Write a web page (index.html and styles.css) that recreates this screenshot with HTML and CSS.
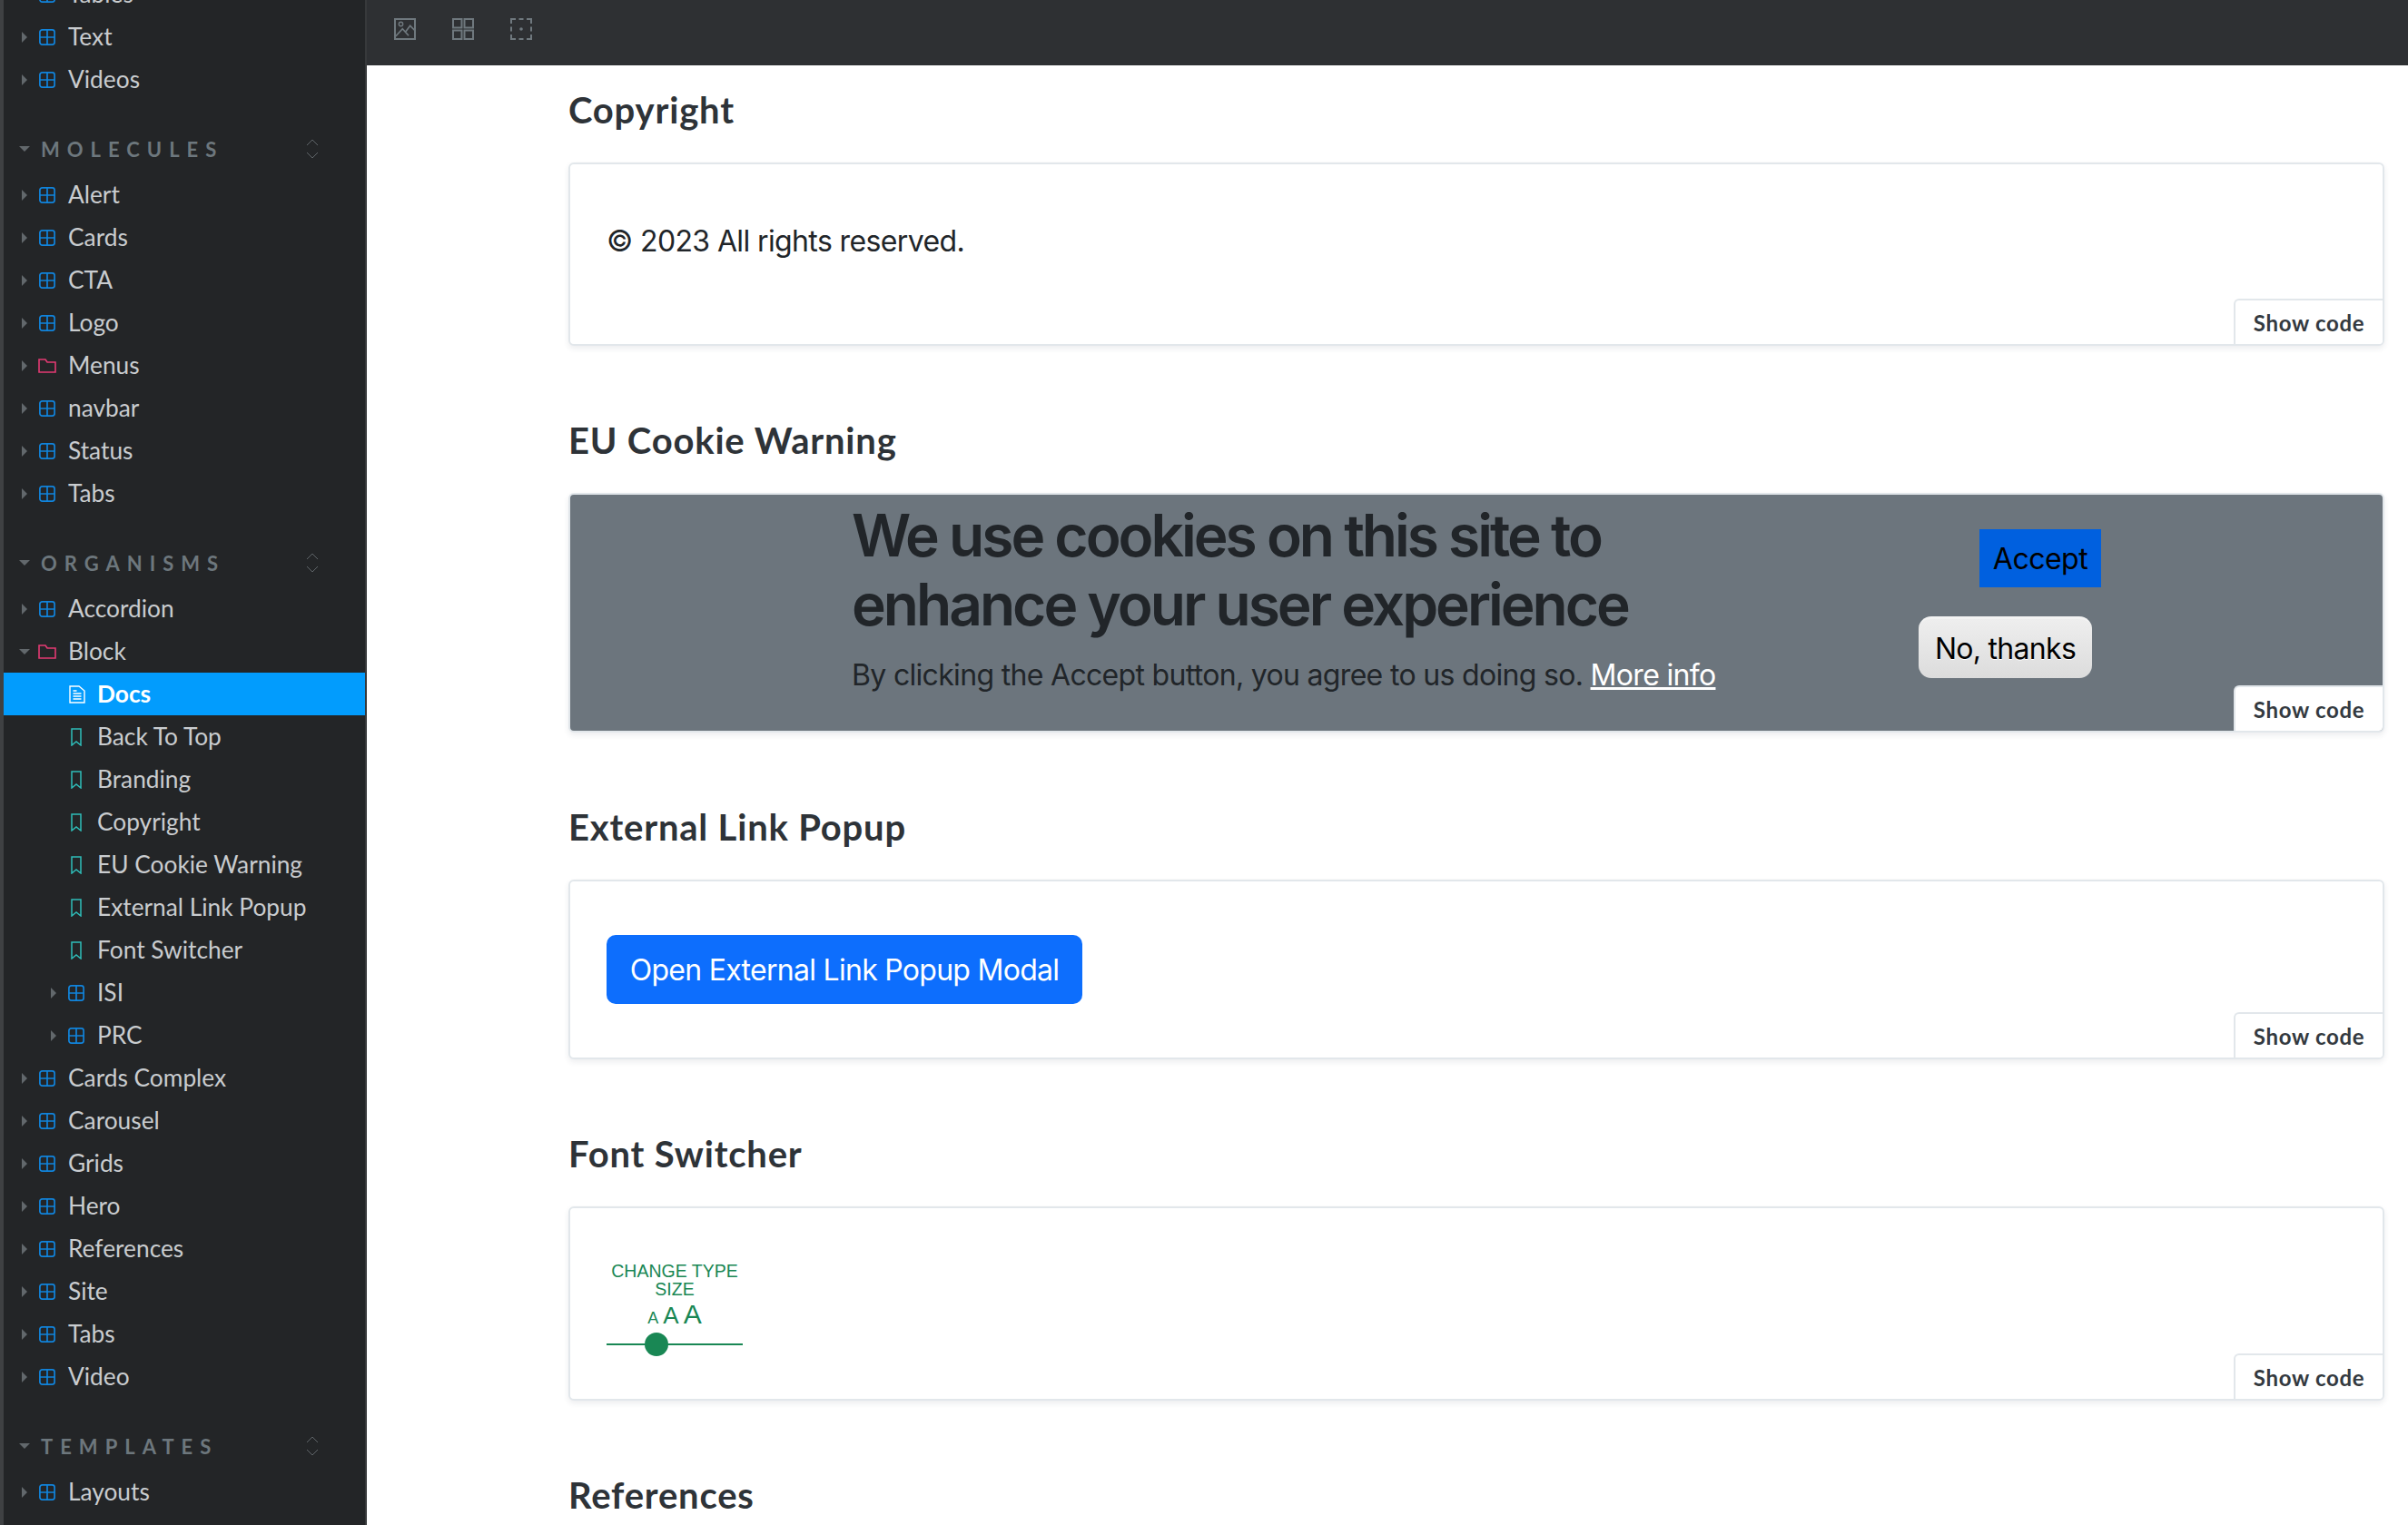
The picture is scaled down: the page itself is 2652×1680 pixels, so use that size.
FILE: index.html
```html
<!DOCTYPE html>
<html lang="en">
<head>
<meta charset="utf-8">
<title>Storybook Docs</title>
<link rel="stylesheet" href="styles.css">
</head>
<body>
<svg class="defs" width="0" height="0" aria-hidden="true">
  <symbol id="i-comp" viewBox="0 0 18 18"><rect x=".9" y=".9" width="16.2" height="16.2" rx="2.6" fill="none" stroke="currentColor" stroke-width="1.7"/><path d="M9 1v16M1 9h16" stroke="currentColor" stroke-width="1.7" fill="none"/></symbol>
  <symbol id="i-folder" viewBox="0 0 20 16"><path d="M1 15V1h7l2 3h9v11z" fill="none" stroke="currentColor" stroke-width="1.6"/></symbol>
  <symbol id="i-story" viewBox="0 0 12 20"><path d="M1 1h10v18l-5-4-5 4z" fill="none" stroke="currentColor" stroke-width="1.5"/></symbol>
  <symbol id="i-doc" viewBox="0 0 18 20"><path d="M1 1h10l6 5v13H1z" fill="none" stroke="currentColor" stroke-width="1.4"/><path d="M4.5 9h9M4.5 12h9M4.5 15h9M4.5 6h4" stroke="currentColor" stroke-width="1.4"/></symbol>
  <symbol id="i-sort" viewBox="0 0 14 22"><path d="M1 7l6-6 6 6M1 15l6 6 6-6" fill="none" stroke="currentColor" stroke-width="1"/></symbol>
</svg>
<div class="app">
  <nav class="sidebar">
    <ul class="tree">
      <li class="row"><i class="tri"></i><svg class="ic comp"><use href="#i-comp"/></svg><span>Tables</span></li>
      <li class="row"><i class="tri"></i><svg class="ic comp"><use href="#i-comp"/></svg><span>Text</span></li>
      <li class="row"><i class="tri"></i><svg class="ic comp"><use href="#i-comp"/></svg><span>Videos</span></li>
      <li class="group"><i class="tri-down"></i><span class="group-name">MOLECULES</span><svg class="sort"><use href="#i-sort"/></svg></li>
      <li class="row"><i class="tri"></i><svg class="ic comp"><use href="#i-comp"/></svg><span>Alert</span></li>
      <li class="row"><i class="tri"></i><svg class="ic comp"><use href="#i-comp"/></svg><span>Cards</span></li>
      <li class="row"><i class="tri"></i><svg class="ic comp"><use href="#i-comp"/></svg><span>CTA</span></li>
      <li class="row"><i class="tri"></i><svg class="ic comp"><use href="#i-comp"/></svg><span>Logo</span></li>
      <li class="row"><i class="tri"></i><svg class="ic folder"><use href="#i-folder"/></svg><span>Menus</span></li>
      <li class="row"><i class="tri"></i><svg class="ic comp"><use href="#i-comp"/></svg><span>navbar</span></li>
      <li class="row"><i class="tri"></i><svg class="ic comp"><use href="#i-comp"/></svg><span>Status</span></li>
      <li class="row"><i class="tri"></i><svg class="ic comp"><use href="#i-comp"/></svg><span>Tabs</span></li>
      <li class="group"><i class="tri-down"></i><span class="group-name">ORGANISMS</span><svg class="sort"><use href="#i-sort"/></svg></li>
      <li class="row"><i class="tri"></i><svg class="ic comp"><use href="#i-comp"/></svg><span>Accordion</span></li>
      <li class="row"><i class="tri-down"></i><svg class="ic folder"><use href="#i-folder"/></svg><span>Block</span></li>
      <li class="row leaf active"><svg class="ic doc"><use href="#i-doc"/></svg><span>Docs</span></li>
      <li class="row leaf"><svg class="ic story"><use href="#i-story"/></svg><span>Back To Top</span></li>
      <li class="row leaf"><svg class="ic story"><use href="#i-story"/></svg><span>Branding</span></li>
      <li class="row leaf"><svg class="ic story"><use href="#i-story"/></svg><span>Copyright</span></li>
      <li class="row leaf"><svg class="ic story"><use href="#i-story"/></svg><span>EU Cookie Warning</span></li>
      <li class="row leaf"><svg class="ic story"><use href="#i-story"/></svg><span>External Link Popup</span></li>
      <li class="row leaf"><svg class="ic story"><use href="#i-story"/></svg><span>Font Switcher</span></li>
      <li class="row nested"><i class="tri"></i><svg class="ic comp"><use href="#i-comp"/></svg><span>ISI</span></li>
      <li class="row nested"><i class="tri"></i><svg class="ic comp"><use href="#i-comp"/></svg><span>PRC</span></li>
      <li class="row"><i class="tri"></i><svg class="ic comp"><use href="#i-comp"/></svg><span>Cards Complex</span></li>
      <li class="row"><i class="tri"></i><svg class="ic comp"><use href="#i-comp"/></svg><span>Carousel</span></li>
      <li class="row"><i class="tri"></i><svg class="ic comp"><use href="#i-comp"/></svg><span>Grids</span></li>
      <li class="row"><i class="tri"></i><svg class="ic comp"><use href="#i-comp"/></svg><span>Hero</span></li>
      <li class="row"><i class="tri"></i><svg class="ic comp"><use href="#i-comp"/></svg><span>References</span></li>
      <li class="row"><i class="tri"></i><svg class="ic comp"><use href="#i-comp"/></svg><span>Site</span></li>
      <li class="row"><i class="tri"></i><svg class="ic comp"><use href="#i-comp"/></svg><span>Tabs</span></li>
      <li class="row"><i class="tri"></i><svg class="ic comp"><use href="#i-comp"/></svg><span>Video</span></li>
      <li class="group"><i class="tri-down"></i><span class="group-name">TEMPLATES</span><svg class="sort"><use href="#i-sort"/></svg></li>
      <li class="row"><i class="tri"></i><svg class="ic comp"><use href="#i-comp"/></svg><span>Layouts</span></li>
    </ul>
  </nav>
  <div class="content">
    <header class="toolbar">
      <svg class="tool" viewBox="0 0 24 24"><rect x="1" y="1" width="22" height="22" fill="none" stroke="currentColor" stroke-width="2"/><circle cx="7.5" cy="6.5" r="2.2" fill="none" stroke="currentColor" stroke-width="1.4"/><path d="M1.7 20l7.6-8.3 6.7 7.6M12.7 15l5-6.7 5.6 5.7" fill="none" stroke="currentColor" stroke-width="1.7"/></svg>
      <svg class="tool" viewBox="0 0 24 24"><path d="M1 1h9.5v9.5H1zM13.5 1H23v9.5h-9.5zM1 13.5h9.5V23H1zM13.5 13.5H23V23h-9.5z" fill="none" stroke="currentColor" stroke-width="2"/></svg>
      <svg class="tool" viewBox="0 0 24 24"><path d="M1 6V1h5M18 1h5v5M23 18v5h-5M6 23H1v-5M1 9.500v5M23 9.500v5M9.500 1h5M9.500 23h5" fill="none" stroke="currentColor" stroke-width="2"/><circle cx="12" cy="12" r="1.800" fill="currentColor"/></svg>
    </header>
    <main class="docs">
      <section class="story">
        <h2>Copyright</h2>
        <div class="card card-copy">
          <p class="copy">© 2023 All rights reserved.</p>
          <button class="show">Show code</button>
        </div>
      </section>
      <section class="story">
        <h2>EU Cookie Warning</h2>
        <div class="card card-cookie">
          <div class="cookie">
            <div class="cookie-text">
              <h3>We use cookies on this site to enhance your user experience</h3>
              <p>By clicking the Accept button, you agree to us doing so. <a href="#">More info</a></p>
            </div>
            <div class="cookie-actions">
              <button class="accept">Accept</button>
              <button class="decline">No, thanks</button>
            </div>
          </div>
          <button class="show">Show code</button>
        </div>
      </section>
      <section class="story">
        <h2>External Link Popup</h2>
        <div class="card card-ext">
          <button class="primary">Open External Link Popup Modal</button>
          <button class="show">Show code</button>
        </div>
      </section>
      <section class="story">
        <h2>Font Switcher</h2>
        <div class="card card-font">
          <div class="fontsw">
            <div class="fs-label">CHANGE TYPE SIZE</div>
            <div class="fs-sizes"><span class="a1">A</span><span class="a2">A</span><span class="a3">A</span></div>
            <div class="fs-slider"><i class="fs-knob"></i></div>
          </div>
          <button class="show">Show code</button>
        </div>
      </section>
      <section class="story">
        <h2>References</h2>
      </section>
    </main>
  </div>
</div>
</body>
</html>
```
FILE: styles.css
```css
* { box-sizing: border-box; }
html, body { margin: 0; padding: 0; height: 1680px; overflow: hidden; background: #fff; }
body { font-family: "Lato", "Noto Sans", sans-serif; color: #212529; }
.defs { position: absolute; }
.app { display: flex; height: 1680px; width: 2652px; overflow: hidden; }

.sidebar {
  width: 404px; flex: none; height: 1680px; overflow: hidden;
  background: #232527;
  border-left: 4px solid #3f4143;
  border-right: 2px solid #37393b;
}
.tree { list-style: none; margin: -30px 0 0; padding: 0; }
.row {
  height: 47px; display: flex; align-items: center;
  padding-left: 20px; color: #c9cccf; font-size: 26.3px; white-space: nowrap;
}
.row span { margin-left: 14px; padding-bottom: 2px; }
.tri { width: 0; height: 0; border-left: 6px solid #62686c; border-top: 6px solid transparent; border-bottom: 6px solid transparent; flex: none; margin-right: 13px; }
.tri-down { width: 0; height: 0; border-top: 6px solid #62686c; border-left: 6px solid transparent; border-right: 6px solid transparent; flex: none; margin-left: -3px; margin-right: 10px; }
.ic { flex: none; display: block; }
.comp { width: 18px; height: 18px; color: #1184dc; }
.folder { width: 20px; height: 16px; color: #e33a73; margin-left: -1px; }
.folder + span { margin-left: 13px; }
.leaf { padding-left: 72px; }
.leaf .story { width: 12px; height: 20px; color: #2fbdb9; margin-left: 2px; }
.leaf .story + span { margin-left: 17px; }
.leaf .doc { width: 18px; height: 20px; color: #fff; }
.leaf .doc + span { margin-left: 13px; }
.nested { padding-left: 52px; }
.active { background: #029cfd; color: #fff; font-weight: 700; }

.group {
  height: 55px; margin-top: 25px; padding-top: 1px; display: flex; align-items: center;
  padding-left: 20px; color: #6d777d; font-size: 22px; font-weight: 700; letter-spacing: 8px;
}
.group .tri-down { margin-right: 12px; }
.group-name { width: 292px; }
.sort { width: 14px; height: 22px; color: #5f6569; flex: none; }

.content { flex: 1; min-width: 0; display: flex; flex-direction: column; height: 1680px; overflow: hidden; }
.toolbar { height: 72px; flex: none; background: #2e3033; display: flex; align-items: flex-start; padding: 20px 0 0 30px; gap: 40px; }
.tool { width: 24px; height: 24px; color: #6f787e; flex: none; }

.docs { padding: 25px 26px 0 222px; }
.story h2 { margin: 0 0 34px; font-size: 40px; line-height: 48px; font-weight: 700; color: #2e3338; letter-spacing: .8px; }
.card {
  position: relative; margin-bottom: 80px; border: 2px solid #e2e7eb; border-radius: 6px;
  background: #fff; box-shadow: 0 3px 6px rgba(40, 60, 80, .09); overflow: hidden;
}
.card-copy { height: 202px; padding: 61px 40px 0; }
.copy { margin: 0; font: 32px/48px "Inter", sans-serif; letter-spacing: -.62px; color: #212529; }

.card-cookie { height: 264px; background: #6c757d; }
.cookie { display: flex; padding: 7px 0 0 310px; }
.cookie-text { width: 1175px; flex: none; font-family: "Inter", sans-serif; }
.cookie-text h3 { margin: 0 0 16px; width: 900px; font-size: 64px; line-height: 76px; font-weight: 600; letter-spacing: -3px; color: #212529; }
.cookie-text p { margin: 0; font-size: 32px; line-height: 48px; letter-spacing: -.68px; color: #212529; }
.cookie-text a { color: #fff; text-decoration: underline; }
.cookie-actions { display: flex; flex-direction: column; align-items: flex-start; padding-top: 31px; }
.accept { margin-left: 67px; width: 134px; height: 64px; padding: 0; border: 0; border-radius: 0; background: #0060df; color: #000; font: 32px "Inter", sans-serif; letter-spacing: -.5px; }
.decline { margin-top: 32px; width: 191px; height: 68px; padding: 0; border: 0; border-top: 3px solid #f3f3f3; border-radius: 14px; background: linear-gradient(#eee, #dcdcdc); color: #000; font: 32px "Inter", sans-serif; letter-spacing: -.7px; text-shadow: 0 1px 0 #fff; }

.card-ext { height: 198px; padding: 59px 40px 0; }
.primary { width: 524px; height: 76px; padding: 0; border: 0; border-radius: 10px; background: #0d6efd; color: #fff; font: 32px "Inter", sans-serif; letter-spacing: -.72px; }

.card-font { height: 214px; padding: 59px 40px 0; }
.fontsw { width: 150px; color: #198754; font-family: "Liberation Sans", Arial, sans-serif; text-align: center; }
.fs-label { font-size: 19.5px; line-height: 20px; }
.fs-sizes { display: flex; justify-content: center; align-items: baseline; gap: 5px; margin-top: 1px; height: 34px; line-height: 34px; }
.a1 { font-size: 18px; }
.a2 { font-size: 26px; }
.a3 { font-size: 30px; }
.fs-slider { position: relative; height: 2px; margin-top: 15px; background: #198754; }
.fs-knob { position: absolute; left: 42px; top: -12px; width: 26px; height: 26px; border-radius: 50%; background: #198754; }

.show {
  position: absolute; right: 0; bottom: 0; width: 164px; height: 50px; padding: 0;
  border: 0; border-top: 2px solid #e2e7eb; border-left: 2px solid #e2e7eb; border-radius: 6px 0 0 0;
  background: #fff; color: #343a40; font: 700 24px "Lato", sans-serif; letter-spacing: .7px;
}
```
